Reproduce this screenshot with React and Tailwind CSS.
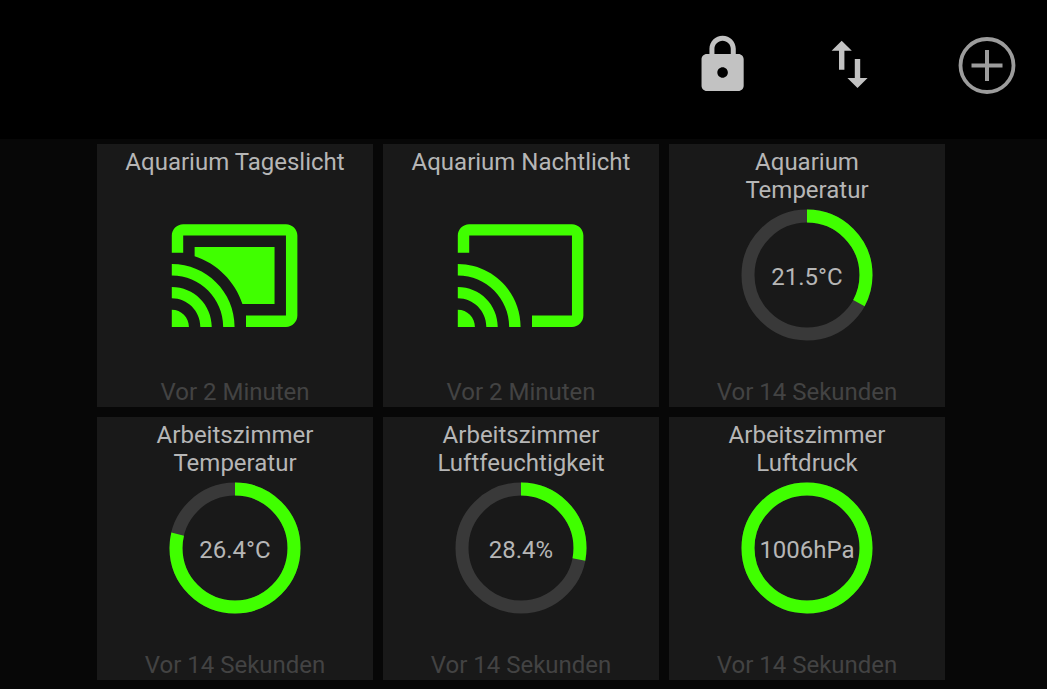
import React from "react";

const CAST_FRAME =
  "M21 3H3c-1.1 0-2 .9-2 2v3h2V5h18v14h-7v2h7c1.1 0 2-.9 2-2V5c0-1.1-.9-2-2-2zM1 18v3h3c0-1.66-1.34-3-3-3zm0-4v2c2.76 0 5 2.24 5 5h2c0-3.87-3.13-7-7-7zm0-4v2c4.97 0 9 4.03 9 9h2c0-6.08-4.93-11-11-11z";
const CAST_SCREEN = "M19 7H5v1.63c3.96 1.28 7.09 4.41 8.37 8.37H19V7z";

const TILES = [
  { title: "Aquarium Tageslicht", type: "switch", on: true, updated: "Vor 2 Minuten" },
  { title: "Aquarium Nachtlicht", type: "switch", on: false, updated: "Vor 2 Minuten" },
  { title: "Aquarium Temperatur", type: "gauge", value: "21.5°C", percent: 32.9, updated: "Vor 14 Sekunden" },
  { title: "Arbeitszimmer Temperatur", type: "gauge", value: "26.4°C", percent: 78.8, updated: "Vor 14 Sekunden" },
  { title: "Arbeitszimmer Luftfeuchtigkeit", type: "gauge", value: "28.4%", percent: 28.1, updated: "Vor 14 Sekunden" },
  { title: "Arbeitszimmer Luftdruck", type: "gauge", value: "1006hPa", percent: 100, updated: "Vor 14 Sekunden" },
];

function LockIcon() {
  return (
    <svg viewBox="0 0 24.3 24.3" className="size-16" fill="currentColor" aria-hidden="true">
      <path d="M18 8h-1V6c0-2.76-2.24-5-5-5S7 3.24 7 6v2H6c-1.1 0-2 .9-2 2v10c0 1.1.9 2 2 2h12c1.1 0 2-.9 2-2V10c0-1.1-.9-2-2-2zm-6 9c-1.1 0-2-.9-2-2s.9-2 2-2 2 .9 2 2-.9 2-2 2zm3.1-9H8.9V6c0-1.71 1.39-3.1 3.1-3.1 1.71 0 3.1 1.39 3.1 3.1v2z" />
    </svg>
  );
}

function SortIcon() {
  return (
    <svg viewBox="0 0 64 64" className="size-16" fill="currentColor" aria-hidden="true">
      <path d="M22.700 7.800L12.600 17.800h7.400v19h5.400V17.800h7.400z" />
      <path d="M38.500 55L28.400 45H35.800V26h5.400v19h7.400z" />
    </svg>
  );
}

function AddIcon() {
  return (
    <svg viewBox="0 0 80 80" className="size-20" fill="none" stroke="currentColor" aria-hidden="true">
      <circle cx="40" cy="40.5" r="26.5" strokeWidth="3.8" />
      <path d="M40 25v31M24.500 40.500h31" strokeWidth="4" />
    </svg>
  );
}

function CastSwitch({ title, on }) {
  return (
    <button type="button" role="switch" aria-checked={on} aria-label={title} className="text-[#40ff00]">
      <svg viewBox="0.16 0 24 24" className="size-[137px]" fill="currentColor" aria-hidden="true">
        <path d={CAST_FRAME} />
        {on && <path d={CAST_SCREEN} />}
      </svg>
    </button>
  );
}

function Gauge({ value, percent }) {
  return (
    <div className="grid place-items-center">
      <svg viewBox="0 0 132 132" className="col-start-1 row-start-1 size-[132px] overflow-visible" fill="none" strokeWidth="13" aria-hidden="true">
        <circle cx="66" cy="65" r="59" stroke="#393939" />
        <circle
          cx="66"
          cy="65"
          r="59"
          stroke="#40ff00"
          pathLength="100"
          strokeDasharray={percent >= 100 ? undefined : `${percent} 100`}
          transform="rotate(-90 66 65)"
        />
      </svg>
      <span className="col-start-1 row-start-1 pt-[3px]">{value}</span>
    </div>
  );
}

function Tile({ tile }) {
  return (
    <li className="flex min-h-[263px] flex-col items-center bg-[#191919] px-5 pt-1 pb-px text-center">
      <h2 className="min-h-14 max-w-56">{tile.title}</h2>
      <div className="mt-[3px] flex h-[137px] items-center justify-center">
        {tile.type === "switch" ? (
          <CastSwitch title={tile.title} on={tile.on} />
        ) : (
          <Gauge value={tile.value} percent={tile.percent} />
        )}
      </div>
      <p className="mt-auto text-[#434343]">{tile.updated}</p>
    </li>
  );
}

export default function App() {
  return (
    <div className="min-h-screen bg-[#070707] font-['Roboto',sans-serif] text-[24px] leading-7 text-[#b6b6b6]">
      <header className="flex items-center justify-end gap-16 bg-black pt-[25px] pr-5 pb-[34px] text-[#c2c2c2]">
        <button type="button" aria-label="Sperren">
          <LockIcon />
        </button>
        <button type="button" aria-label="Sortieren">
          <SortIcon />
        </button>
        <button type="button" aria-label="Hinzufügen" className="text-[#9c9c9c]">
          <AddIcon />
        </button>
      </header>
      <main className="pt-[5px] pr-[102px] pb-[9px] pl-[97px]">
        <ul className="grid grid-cols-3 gap-[10px]">
          {TILES.map((tile) => (
            <Tile key={tile.title} tile={tile} />
          ))}
        </ul>
      </main>
    </div>
  );
}
